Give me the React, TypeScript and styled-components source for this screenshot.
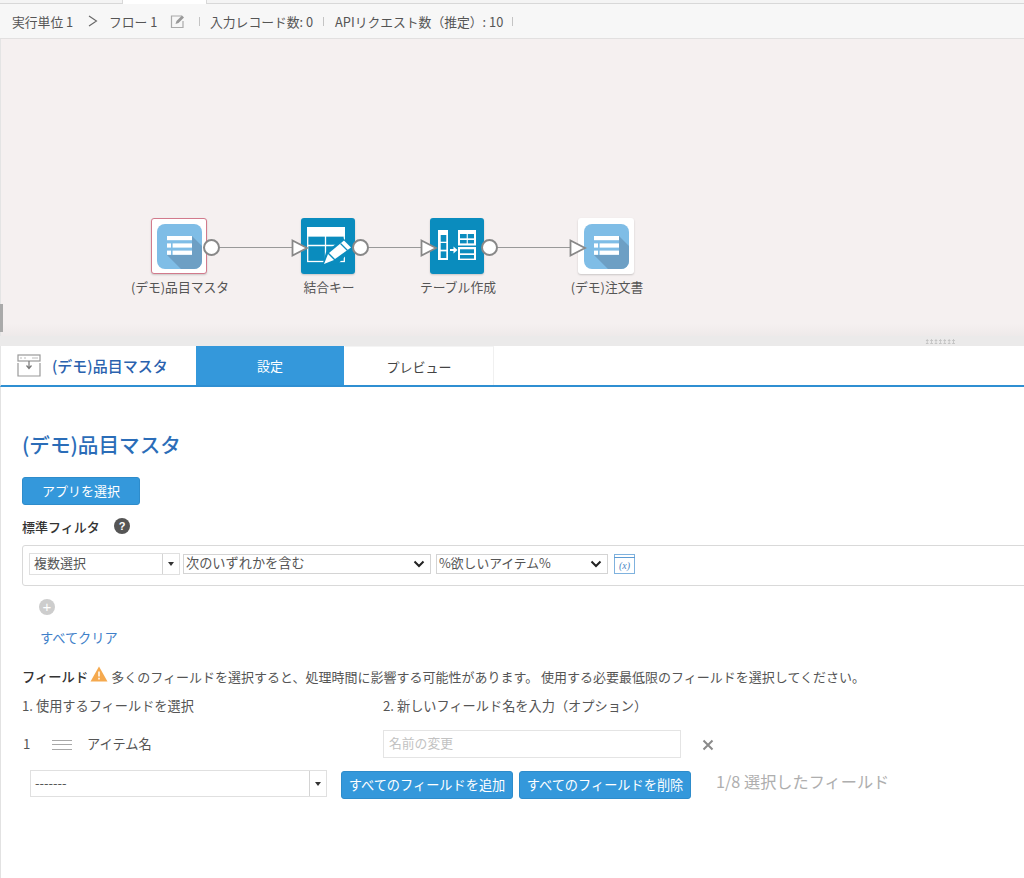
import React from "react";
import styled, { createGlobalStyle } from "styled-components";

const GlobalStyle = createGlobalStyle`
  html, body { margin: 0; padding: 0; background: #fff; }
  body { font-family: "Noto Sans CJK JP", "Liberation Sans", sans-serif; color: #444; overflow: hidden; }
`;

const Page = styled.div`
  width: 1024px;
  height: 878px;
  display: flex;
  flex-direction: column;
  overflow: hidden;
`;

const TopTabs = styled.div`
  height: 3px;
  background: #f4f4f4;
  border-bottom: 1px solid #d8d8d8;
  padding-left: 122px;
`;

const TopTab = styled.div`
  width: 85px;
  height: 4px;
  background: #fff;
  border-left: 1px solid #d8d8d8;
  border-right: 1px solid #d8d8d8;
  box-sizing: border-box;
`;

const InfoBar = styled.div`
  height: 34px;
  box-sizing: content-box;
  background: #f7f7f7;
  border-bottom: 1px solid #e2e0e0;
  display: flex;
  align-items: center;
  padding-left: 12px;
  font-size: 12.8px;
  color: #555;
  white-space: nowrap;
`;

const Crumb = styled.span<{ $w: number; $ml?: number }>`
  width: ${(p) => p.$w}px;
  margin-left: ${(p) => p.$ml ?? 0}px;
  flex: none;
`;

const Sep = styled.span<{ $w: number; $ml?: number }>`
  width: ${(p) => p.$w}px;
  margin-left: ${(p) => p.$ml ?? 0}px;
  flex: none;
  height: 10px;
  &::before {
    content: "";
    display: block;
    width: 1px;
    height: 9px;
    margin-top: 1px;
    background: #c4c4c4;
  }
`;

const BarIcon = styled.svg`
  flex: none;
`;

const Canvas = styled.div`
  height: 297px;
  position: relative;
  background: linear-gradient(#f5f0f0 0, #f5f0f0 285px, #eeeaea 297px);
  border-left: 1px solid #e4e4e4;
`;

const SideMark = styled.div`
  position: absolute;
  left: -1px;
  top: 265px;
  width: 3px;
  height: 28px;
  background: #aaa;
`;

const Wire = styled.div<{ $x: number; $w: number }>`
  position: absolute;
  left: ${(p) => p.$x - 1}px;
  top: 208px;
  width: ${(p) => p.$w}px;
  height: 1px;
  background: #999;
`;

const NodeBox = styled.div<{ $x: number; $kind: "app" | "tool"; $selected?: boolean }>`
  position: absolute;
  left: ${(p) => p.$x - 1}px;
  top: 179px;
  width: ${(p) => (p.$kind === "app" ? 56 : 54)}px;
  height: 56px;
  box-sizing: border-box;
  border-radius: 3px;
  background: ${(p) => (p.$kind === "app" ? "#fff" : "#0a8cbe")};
  border: ${(p) => (p.$selected ? "1.5px solid #d27a8c" : "none")};
  box-shadow: 0 1px 2px rgba(0, 0, 0, 0.18);
  display: flex;
  align-items: center;
  justify-content: center;
  svg { display: block; flex: none; }
`;

const NodeLabel = styled.div<{ $cx: number }>`
  position: absolute;
  left: ${(p) => p.$cx - 61}px;
  top: 238px;
  width: 120px;
  text-align: center;
  font-size: 12.8px;
  line-height: 20px;
  color: #555;
`;

const OutPort = styled.div<{ $cx: number }>`
  position: absolute;
  left: ${(p) => p.$cx - 9}px;
  top: 200px;
  width: 17px;
  height: 17px;
  box-sizing: border-box;
  border-radius: 50%;
  background: #fff;
  border: 2px solid #888;
`;

const InPort = styled.svg<{ $x: number }>`
  position: absolute;
  left: ${(p) => p.$x - 1}px;
  top: 200px;
`;

const Splitter = styled.div`
  height: 10px;
  background: #ebeaea;
  display: flex;
  justify-content: flex-end;
  align-items: center;
  padding-right: 68px;
`;

const Grip = styled.div`
  width: 31px;
  height: 5px;
  background-image: radial-gradient(circle, #c4c4c4 1.1px, transparent 1.3px);
  background-size: 4.4px 3px;
`;

const PanelHead = styled.div`
  height: 39px;
  display: flex;
  border-bottom: 2px solid #2f8fd2;
  border-left: 1px solid #e6e6e6;
`;

const PanelTitle = styled.div`
  width: 195px;
  box-sizing: border-box;
  padding-left: 16px;
  display: flex;
  align-items: center;
  gap: 11px;
  font-size: 15px;
  font-weight: 500;
  color: #2a62ae;
`;

const Tab = styled.div<{ $active?: boolean }>`
  width: 148px;
  display: flex;
  align-items: center;
  justify-content: center;
  font-size: 13px;
  background: ${(p) => (p.$active ? "#3498db" : "#fff")};
  color: ${(p) => (p.$active ? "#fff" : "#444")};
  border-right: ${(p) => (p.$active ? "none" : "1px solid #f0f0f0")};
  border-top: ${(p) => (p.$active ? "none" : "1px solid #f4f4f4")};
  margin-left: ${(p) => (p.$active ? "0" : "1px")};
`;

const Body = styled.div`
  flex: 1;
  border-left: 1px solid #e2e2e2;
  padding: 42px 0 0 21px;
  display: flex;
  flex-direction: column;
  align-items: flex-start;
`;

const Heading = styled.h1`
  margin: 0;
  font-size: 20.6px;
  line-height: 30px;
  font-weight: 500;
  color: #2b6db8;
`;

const Button = styled.button<{ $w: number }>`
  width: ${(p) => p.$w}px;
  height: 28px;
  padding: 0 0 2px;
  border: 1px solid #2e8ccb;
  border-radius: 3px;
  background: #3498db;
  color: #fff;
  font: inherit;
  font-size: 13.2px;
  flex: none;
`;

const PickButton = styled(Button)`
  margin-top: 18px;
  font-size: 13px;
`;

const ActionButton = styled(Button)`
  margin-top: 1px;
`;

const FilterLabel = styled.div`
  margin-top: 11px;
  height: 20px;
  display: flex;
  align-items: center;
  gap: 14px;
  font-size: 13px;
  font-weight: 500;
  color: #333;
  svg { display: block; }
`;

const FilterBox = styled.div`
  margin-top: 9px;
  width: 1010px;
  height: 41px;
  box-sizing: border-box;
  border: 1px solid #d9d9d9;
  border-radius: 3px;
  display: flex;
  align-items: center;
  padding: 0 0 3px 6px;
  gap: 3px;
  flex: none;
`;

const Combo = styled.div<{ $w: number; $h: number }>`
  width: ${(p) => p.$w}px;
  height: ${(p) => p.$h}px;
  box-sizing: border-box;
  border: 1px solid #e0e0e0;
  background: #fff;
  display: flex;
  align-items: center;
  font-size: 13px;
  color: #555;
  flex: none;
  padding-left: 4px;
`;

const ComboText = styled.span`
  flex: 1;
  padding-bottom: 3px;
`;

const ComboArrow = styled.span`
  width: 16px;
  align-self: stretch;
  border-left: 1px solid #d4d4d4;
  display: flex;
  align-items: center;
  justify-content: center;
  &::before {
    content: "";
    border-left: 3px solid transparent;
    border-right: 3px solid transparent;
    border-top: 4px solid #333;
  }
`;

const SelectBox = styled.div<{ $w: number; $ml?: number; $size: number }>`
  width: ${(p) => p.$w}px;
  margin-left: ${(p) => p.$ml ?? 0}px;
  height: 20px;
  box-sizing: border-box;
  border: 1px solid #d4d4d4;
  background: #fff;
  display: flex;
  align-items: center;
  justify-content: space-between;
  padding: 0 5px 0 2px;
  font-size: ${(p) => p.$size}px;
  color: #555;
  flex: none;
`;

const SelectText = styled.span`
  padding-bottom: 3px;
`;

const VarIcon = styled.svg`
  margin-left: 3px;
  flex: none;
`;

const AddCircle = styled.div`
  margin: 13px 0 0 17px;
  width: 16px;
  height: 16px;
  border-radius: 50%;
  background: #cdcdcd;
  color: #fff;
  font-size: 15px;
  line-height: 15px;
  text-align: center;
  font-family: "Liberation Sans", sans-serif;
`;

const ClearLink = styled.a`
  margin: 13px 0 0 18px;
  font-size: 13.2px;
  line-height: 20px;
  color: #3f7fc9;
`;

const FieldNote = styled.div`
  margin-top: 18px;
  height: 20px;
  display: flex;
  align-items: center;
  font-size: 13px;
  color: #555;
  white-space: nowrap;
  svg { margin: -5px 3px 0 2px; flex: none; }
`;

const FieldName = styled.b`
  font-weight: 500;
  font-size: 13.3px;
  color: #333;
`;

const FieldGrid = styled.div`
  display: grid;
  grid-template-columns: 361px 298px 1fr;
  align-items: center;
  font-size: 13.2px;
  color: #555;
`;

const ColHead = styled.div`
  height: 20px;
  margin-top: 10px;
  line-height: 20px;
  white-space: nowrap;
`;

const FieldRow = styled.div`
  display: flex;
  align-items: center;
  height: 26px;
  margin-top: 14px;
  margin-bottom: 2px;
`;

const RowIndex = styled.span`
  width: 30px;
  padding-left: 1px;
  box-sizing: border-box;
`;

const DragHandle = styled.span`
  width: 20px;
  height: 8px;
  margin-right: 15px;
  margin-top: 4px;
  border-top: 1px solid #a8a8a8;
  border-bottom: 1px solid #a8a8a8;
  position: relative;
  &::before {
    content: "";
    position: absolute;
    left: 0;
    right: 0;
    top: 3px;
    height: 1px;
    background: #a8a8a8;
  }
`;

const RenameInput = styled.div`
  height: 28px;
  margin-top: 14px;
  box-sizing: border-box;
  border: 1px solid #e4e4e4;
  padding-left: 5px;
  line-height: 24px;
  font-size: 12.8px;
  color: #c2c2c2;
`;

const RemoveX = styled.svg`
  margin: 16px 0 0 21px;
  display: block;
`;

const ActionRow = styled.div`
  margin: 12px 0 0 8px;
  display: flex;
  align-items: flex-start;
  gap: 6px;
`;

const AddCombo = styled(Combo)`
  margin-right: 8px;
`;

const Count = styled.span`
  margin-left: 19px;
  font-size: 16.2px;
  line-height: 22px;
  color: #aeaeae;
`;

function ListIcon({ id }: { id: string }) {
  return (
    <svg width="45" height="45" viewBox="0 0 45 45">
      <defs>
        <clipPath id={id}>
          <rect width="45" height="45" rx="8" />
        </clipPath>
      </defs>
      <rect width="45" height="45" rx="8" fill="#7fbde6" />
      <polygon clipPath={`url(#${id})`} points="35,12 48,25 48,48 27,48 10,31 35,31" fill="#6d9fc4" />
      <rect x="10" y="12" width="25" height="4.2" fill="#fff" />
      <rect x="10" y="19.4" width="4" height="4.2" fill="#fff" />
      <rect x="15.6" y="19.4" width="19.4" height="4.2" fill="#fff" />
      <rect x="10" y="26.6" width="4" height="4.2" fill="#fff" />
      <rect x="15.6" y="26.6" width="19.4" height="4.2" fill="#fff" />
    </svg>
  );
}

function KeyIcon() {
  return (
    <svg width="55" height="56" viewBox="0 0 55 56">
      <rect x="6" y="9" width="38" height="9" fill="#fff" />
      <rect x="6.7" y="18" width="36.6" height="25.5" fill="none" stroke="#fff" strokeWidth="1.3" />
      <path d="M7 27.5H43M24.5 18V44" stroke="#fff" strokeWidth="1.3" />
      <polygon points="21,48.5 25,34 42,20 52,30 37,46" fill="#0a8cbe" />
      <polygon points="23,46 27,36 33,42" fill="#fff" />
      <polygon points="28,35 43,22.5 50,29.5 34,41" fill="#fff" />
      <path d="M39.5 25.5L46.5 32.5" stroke="#0a8cbe" strokeWidth="1.2" />
    </svg>
  );
}

function TableIcon() {
  return (
    <svg width="55" height="56" viewBox="0 0 55 56">
      <rect x="8" y="12" width="10" height="30" fill="#fff" />
      <rect x="10.7" y="17" width="5.6" height="6.7" fill="#0a8cbe" />
      <rect x="10.7" y="25" width="5.6" height="6.7" fill="#0a8cbe" />
      <rect x="10.7" y="33.4" width="5.6" height="6.6" fill="#0a8cbe" />
      <path d="M20 32H24" stroke="#fff" strokeWidth="2" />
      <polygon points="23.5,28.5 27.5,32 23.5,35.5" fill="#fff" />
      <rect x="28" y="12" width="18" height="15.5" fill="#fff" />
      <rect x="30" y="16" width="6.7" height="4.3" fill="#0a8cbe" />
      <rect x="37.8" y="16" width="6.2" height="4.3" fill="#0a8cbe" />
      <rect x="30" y="22" width="6.7" height="3.4" fill="#0a8cbe" />
      <rect x="37.8" y="22" width="6.2" height="3.4" fill="#0a8cbe" />
      <rect x="28" y="29" width="18" height="13" fill="#fff" />
      <rect x="30" y="31.3" width="14" height="4" fill="#0a8cbe" />
      <rect x="30" y="37" width="14" height="3.6" fill="#0a8cbe" />
    </svg>
  );
}

function Chevron() {
  return (
    <svg width="12" height="8" viewBox="0 0 12 8">
      <path d="M1.5 1.5L6 6L10.5 1.5" fill="none" stroke="#222" strokeWidth="2" />
    </svg>
  );
}

function Triangle({ x }: { x: number }) {
  return (
    <InPort $x={x} width="18" height="18" viewBox="0 0 18 18">
      <polygon points="1.5,1.5 16,9 1.5,16.5" fill="#fff" stroke="#888" strokeWidth="1.8" />
    </InPort>
  );
}

export default function App() {
  return (
    <Page>
      <GlobalStyle />
      <TopTabs>
        <TopTab />
      </TopTabs>
      <InfoBar>
        <Crumb $w={76}>実行単位 1</Crumb>
        <BarIcon width="10" height="12" viewBox="0 0 10 12">
          <path d="M1 1L8.5 6L1 11" fill="none" stroke="#666" strokeWidth="1.1" />
        </BarIcon>
        <Crumb $w={61} $ml={11}>フロー 1</Crumb>
        <BarIcon width="16" height="15" viewBox="0 0 16 15">
          <path d="M12 2H1.5V13.5H13V7" fill="none" stroke="#aaa" strokeWidth="1.2" />
          <path d="M5.5 10L6.5 7L12 1.5L14 3.5L8.5 9Z" fill="#999" />
        </BarIcon>
        <Sep $w={11} $ml={13} />
        <Crumb $w={113}>入力レコード数: 0</Crumb>
        <Sep $w={12} />
        <Crumb $w={177}>APIリクエスト数（推定）: 10</Crumb>
        <Sep $w={10} />
      </InfoBar>
      <Canvas>
        <SideMark />
        <Wire $x={219} $w={73} />
        <Wire $x={368} $w={53} />
        <Wire $x={497} $w={73} />
        <NodeBox $x={151} $kind="app" $selected>
          <ListIcon id="clipA" />
        </NodeBox>
        <NodeBox $x={301} $kind="tool">
          <KeyIcon />
        </NodeBox>
        <NodeBox $x={430} $kind="tool">
          <TableIcon />
        </NodeBox>
        <NodeBox $x={578} $kind="app">
          <ListIcon id="clipB" />
        </NodeBox>
        <OutPort $cx={211} />
        <OutPort $cx={360} />
        <OutPort $cx={489} />
        <Triangle x={291} />
        <Triangle x={420} />
        <Triangle x={569} />
        <NodeLabel $cx={180}>(デモ)品目マスタ</NodeLabel>
        <NodeLabel $cx={329}>結合キー</NodeLabel>
        <NodeLabel $cx={458}>テーブル作成</NodeLabel>
        <NodeLabel $cx={607}>(デモ)注文書</NodeLabel>
      </Canvas>
      <Splitter>
        <Grip />
      </Splitter>
      <PanelHead>
        <PanelTitle>
          <svg width="24" height="23" viewBox="0 0 24 23">
            <path d="M1 9V22H23V9" fill="none" stroke="#999" strokeWidth="1.2" />
            <rect x="1" y="1" width="22" height="6" fill="#fff" stroke="#999" strokeWidth="1.2" />
            <path d="M3 4H5M7 4H9M15 4H21" stroke="#bbb" strokeWidth="1" />
            <path d="M12 7V14M9.5 11.5L12 14.5L14.5 11.5" fill="none" stroke="#777" strokeWidth="1.2" />
          </svg>
          (デモ)品目マスタ
        </PanelTitle>
        <Tab $active>設定</Tab>
        <Tab>プレビュー</Tab>
      </PanelHead>
      <Body>
        <Heading>(デモ)品目マスタ</Heading>
        <PickButton $w={118}>アプリを選択</PickButton>
        <FilterLabel>
          標準フィルタ
          <svg width="16" height="16" viewBox="0 0 16 16">
            <circle cx="8" cy="8" r="8" fill="#555" />
            <text x="8" y="12" textAnchor="middle" fontSize="11" fontWeight="700" fill="#fff" fontFamily="Liberation Sans">?</text>
          </svg>
        </FilterLabel>
        <FilterBox>
          <Combo $w={151} $h={22}>
            <ComboText>複数選択</ComboText>
            <ComboArrow />
          </Combo>
          <SelectBox $w={248} $size={13.2}>
            <SelectText>次のいずれかを含む</SelectText>
            <Chevron />
          </SelectBox>
          <SelectBox $w={172} $ml={2} $size={12.8}>
            <SelectText>%欲しいアイテム%</SelectText>
            <Chevron />
          </SelectBox>
          <VarIcon width="21" height="20" viewBox="0 0 21 20">
            <rect x="0.5" y="0.5" width="20" height="19" fill="#fff" stroke="#7fb2de" />
            <path d="M0 3.5H21" stroke="#5e9bd3" />
            <text x="10.5" y="15" textAnchor="middle" fontSize="10" fontStyle="italic" fill="#4b86c4" fontFamily="Liberation Serif">(x)</text>
          </VarIcon>
        </FilterBox>
        <AddCircle>+</AddCircle>
        <ClearLink>すべてクリア</ClearLink>
        <FieldNote>
          <FieldName>フィールド</FieldName>
          <svg width="18" height="16" viewBox="0 0 18 16">
            <path d="M9 0.5L17.5 15.5H0.5Z" fill="#f5a94e" />
            <path d="M9 5.5V10.5M9 11.8V13.5" stroke="#fff" strokeWidth="1.5" />
          </svg>
          多くのフィールドを選択すると、処理時間に影響する可能性があります。 使用する必要最低限のフィールドを選択してください。
        </FieldNote>
        <FieldGrid>
          <ColHead>1. 使用するフィールドを選択</ColHead>
          <ColHead>2. 新しいフィールド名を入力（オプション）</ColHead>
          <span />
          <FieldRow>
            <RowIndex>1</RowIndex>
            <DragHandle />
            アイテム名
          </FieldRow>
          <RenameInput>名前の変更</RenameInput>
          <RemoveX width="12" height="12" viewBox="0 0 12 12">
            <path d="M1.5 1.5L10.5 10.5M10.5 1.5L1.5 10.5" stroke="#8a8a8a" strokeWidth="2" />
          </RemoveX>
        </FieldGrid>
        <ActionRow>
          <AddCombo $w={297} $h={27}>
            <ComboText>-------</ComboText>
            <ComboArrow />
          </AddCombo>
          <ActionButton $w={172}>すべてのフィールドを追加</ActionButton>
          <ActionButton $w={172}>すべてのフィールドを削除</ActionButton>
          <Count>1/8 選択したフィールド</Count>
        </ActionRow>
      </Body>
    </Page>
  );
}
